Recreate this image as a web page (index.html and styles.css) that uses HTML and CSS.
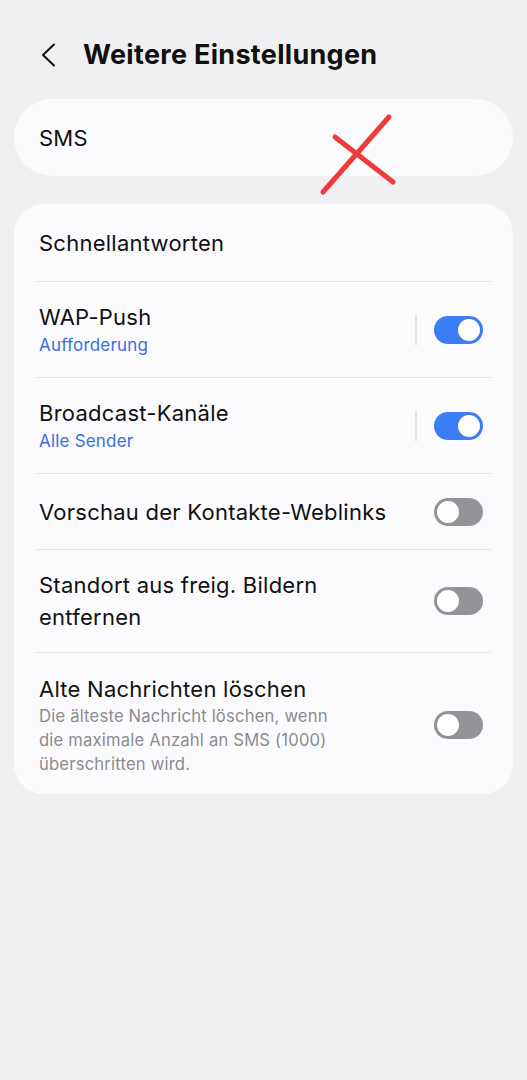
FILE: index.html
```html
<!DOCTYPE html>
<html lang="de">
<head>
    <meta charset="UTF-8">
    <meta name="viewport" content="width=device-width, initial-scale=1.0">
    <title>Weitere Einstellungen</title>
    <link rel="stylesheet" href="styles.css">
</head>
<body>
    <div class="screen">
        <header class="top-bar">
            <svg class="back-icon" width="16" height="24" viewBox="0 0 16 24">
                <path d="M14 1.5 L3 12 L14 22.5" fill="none" stroke="#111" stroke-width="2" stroke-linecap="round" stroke-linejoin="round"/>
            </svg>
            <h1>Weitere Einstellungen</h1>
        </header>

        <div class="card card-single">
            <div class="row row-simple">
                <span class="title">SMS</span>
            </div>
        </div>

        <div class="card">
            <div class="row row-simple">
                <span class="title">Schnellantworten</span>
            </div>
            <div class="row row-sub">
                <div class="text">
                    <div class="title">WAP-Push</div>
                    <div class="sub">Aufforderung</div>
                </div>
                <span class="vbar"></span>
                <span class="switch on"></span>
            </div>
            <div class="row row-sub">
                <div class="text">
                    <div class="title">Broadcast-Kanäle</div>
                    <div class="sub">Alle Sender</div>
                </div>
                <span class="vbar"></span>
                <span class="switch on"></span>
            </div>
            <div class="row row-simple row-short">
                <span class="title">Vorschau der Kontakte-Weblinks</span>
                <span class="switch"></span>
            </div>
            <div class="row row-two">
                <div class="text">
                    <div class="title">Standort aus freig. Bildern<br>entfernen</div>
                </div>
                <span class="switch"></span>
            </div>
            <div class="row row-desc">
                <div class="text">
                    <div class="title">Alte Nachrichten löschen</div>
                    <div class="desc">Die älteste Nachricht löschen, wenn<br>die maximale Anzahl an SMS (1000)<br>überschritten wird.</div>
                </div>
                <span class="switch"></span>
            </div>
        </div>

        <svg class="mark" width="90" height="90" viewBox="0 0 90 90">
            <path d="M5 79 L71 4 M17 24 L75 69" fill="none" stroke="#f23a3b" stroke-width="5" stroke-linecap="round"/>
        </svg>
    </div>
</body>
</html>
```

FILE: styles.css
```css
* {
    box-sizing: border-box;
}

body {
    margin: 0;
    background-color: #f0f0f3;
    font-family: "Inter", "Liberation Sans", sans-serif;
    color: #111;
}

.screen {
    position: relative;
    padding: 0 14px;
}

/* Header */
.top-bar {
    display: flex;
    align-items: center;
    height: 99px;
    padding-left: 26px;
    padding-top: 10px;
}

.back-icon {
    margin-right: 27px;
}

h1 {
    margin: 0;
    font-size: 27px;
    font-weight: 700;
    letter-spacing: 0.3px;
}

/* Cards */
.card {
    background-color: #fbfbfd;
    border-radius: 30px;
    padding: 0 22px;
    margin-bottom: 28px;
}

.card-single {
    border-radius: 39px;
}

.row {
    display: flex;
    align-items: center;
    padding: 0 8px 0 3px;
    border-top: 1px solid #e4e4e7;
}

.row:first-child {
    border-top: none;
}

.row-simple {
    min-height: 77px;
}

.row-short {
    min-height: 76px;
}

.row-sub {
    min-height: 96px;
}

.row-two {
    min-height: 103px;
}

.row-desc {
    padding-top: 21px;
    padding-bottom: 18px;
}

.text {
    flex: 1;
}

.row-simple .title {
    flex: 1;
}

.title {
    font-size: 22px;
    line-height: 30px;
    letter-spacing: 0.25px;
}

.row-two .title {
    line-height: 32px;
}

.sub {
    font-size: 17px;
    line-height: 26px;
    letter-spacing: 0.2px;
    color: #3a6fd8;
}

.desc {
    font-size: 16.6px;
    line-height: 24px;
    letter-spacing: 0.2px;
    color: #8b8b8e;
}

.vbar {
    width: 2px;
    height: 30px;
    background-color: #e2e2e5;
    margin-right: 17px;
}

/* Switches */
.switch {
    position: relative;
    width: 49px;
    height: 28px;
    border-radius: 14px;
    background-color: #939398;
    flex-shrink: 0;
}

.switch::after {
    content: "";
    position: absolute;
    top: 3px;
    left: 3px;
    width: 22px;
    height: 22px;
    border-radius: 50%;
    background-color: #fff;
}

.switch.on {
    background-color: #3c7cf4;
}

.switch.on::after {
    left: 24px;
}

/* red cross drawn over the SMS card */
.mark {
    position: absolute;
    left: 318px;
    top: 113px;
}
```
